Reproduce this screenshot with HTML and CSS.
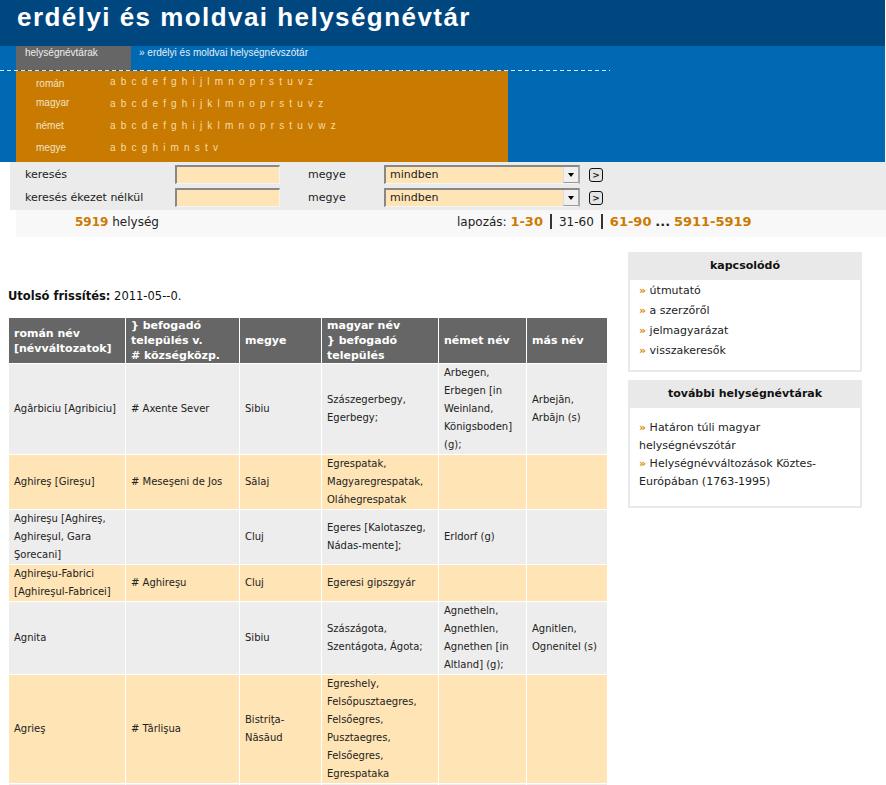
FILE: index.html
```html
<!DOCTYPE html>
<html lang="hu">
<head>
<meta charset="utf-8">
<title>erdélyi és moldvai helységnévtár</title>
<link rel="stylesheet" href="styles.css">
</head>
<body>
<header class="masthead">
  <h1 class="site-title">erdélyi és moldvai helységnévtár</h1>
</header>
<nav class="navbar">
  <div class="tabs">
    <span class="tab">helységnévtárak</span>
    <span class="crumb">» erdélyi és moldvai helységnévszótár</span>
  </div>
  <div class="dash"></div>
  <div class="alpha">
    <div class="alpha-row"><span class="alpha-label lbl-1">román</span><span class="letters">a b c d e f g h i j l m n o p r s t u v z</span></div>
    <div class="alpha-row"><span class="alpha-label lbl-2">magyar</span><span class="letters">a b c d e f g h i j k l m n o p r s t u v z</span></div>
    <div class="alpha-row"><span class="alpha-label">német</span><span class="letters">a b c d e f g h i j k l m n o p r s t u v w z</span></div>
    <div class="alpha-row"><span class="alpha-label">megye</span><span class="letters">a b c g h i m n s t v</span></div>
  </div>
</nav>
<form class="search">
  <div class="search-row">
    <span class="s-label">keresés</span>
    <span class="s-input"></span>
    <span class="s-megye">megye</span>
    <span class="s-select"><span class="s-value">mindben</span><span class="s-arrow"><span class="tri"></span></span></span>
    <span class="s-go">&gt;</span>
  </div>
  <div class="search-row">
    <span class="s-label">keresés ékezet nélkül</span>
    <span class="s-input"></span>
    <span class="s-megye">megye</span>
    <span class="s-select"><span class="s-value">mindben</span><span class="s-arrow"><span class="tri"></span></span></span>
    <span class="s-go">&gt;</span>
  </div>
</form>
<div class="countbar">
  <span class="count"><b class="hl">5919</b> helység</span>
  <span class="pager">lapozás: <b class="hl big">1-30</b><span class="sep"></span>31-60<span class="sep"></span><b class="hl big">61-90</b> <b class="big">...</b> <b class="hl big">5911-5919</b></span>
</div>
<div class="content">
  <main class="main">
    <p class="updated"><b>Utolsó frissítés:</b> 2011-05--0.</p>
    <table class="places">
      <colgroup>
        <col class="c1"><col class="c2"><col class="c3"><col class="c4"><col class="c5"><col class="c6">
      </colgroup>
      <thead>
        <tr>
          <th>román név<br>[névváltozatok]</th>
          <th>} befogadó<br>település v.<br># községközp.</th>
          <th>megye</th>
          <th>magyar név<br>} befogadó<br>település</th>
          <th>német név</th>
          <th>más név</th>
        </tr>
      </thead>
      <tbody>
        <tr class="odd">
          <td>Agârbiciu [Agribiciu]</td>
          <td># Axente Sever</td>
          <td>Sibiu</td>
          <td>Szászegerbegy, Egerbegy;</td>
          <td>Arbegen, Erbegen [in Weinland, Königsboden] (g);</td>
          <td>Arbejān, Arbājn (s)</td>
        </tr>
        <tr class="even">
          <td>Aghireş [Gireşu]</td>
          <td># Meseşeni de Jos</td>
          <td>Sălaj</td>
          <td>Egrespatak, Magyaregrespatak, Oláhegrespatak</td>
          <td></td>
          <td></td>
        </tr>
        <tr class="odd">
          <td>Aghireşu [Aghireş, Aghireşul, Gara Şorecani]</td>
          <td></td>
          <td>Cluj</td>
          <td>Egeres [Kalotaszeg, Nádas-mente];</td>
          <td>Erldorf (g)</td>
          <td></td>
        </tr>
        <tr class="even">
          <td>Aghireşu-Fabrici [Aghireşul-Fabricei]</td>
          <td># Aghireşu</td>
          <td>Cluj</td>
          <td>Egeresi gipszgyár</td>
          <td></td>
          <td></td>
        </tr>
        <tr class="odd">
          <td>Agnita</td>
          <td></td>
          <td>Sibiu</td>
          <td>Szászágota, Szentágota, Ágota;</td>
          <td>Agnetheln, Agnethlen, Agnethen [in Altland] (g);</td>
          <td>Agnitlen, Ognenitel (s)</td>
        </tr>
        <tr class="even">
          <td>Agrieş</td>
          <td># Târlişua</td>
          <td>Bistriţa-Năsăud</td>
          <td>Egreshely, Felsőpusztaegres, Felsőegres, Pusztaegres, Felsőegres, Egrespataka</td>
          <td></td>
          <td></td>
        </tr>
        <tr class="odd">
          <td>&nbsp;</td>
          <td>&nbsp;</td>
          <td>&nbsp;</td>
          <td>&nbsp;</td>
          <td>&nbsp;</td>
          <td>&nbsp;</td>
        </tr>
      </tbody>
    </table>
  </main>
  <aside class="sidebar">
    <section class="box">
      <h2 class="box-head">kapcsolódó</h2>
      <div class="box-body links">
        <div><span class="raquo">»</span> útmutató</div>
        <div><span class="raquo">»</span> a szerzőről</div>
        <div><span class="raquo">»</span> jelmagyarázat</div>
        <div><span class="raquo">»</span> visszakeresők</div>
      </div>
    </section>
    <section class="box">
      <h2 class="box-head">további helységnévtárak</h2>
      <div class="box-body more">
        <span class="raquo">»</span> Határon túli magyar helységnévszótár<br>
        <span class="raquo">»</span> Helységnévváltozások Köztes-Európában (1763-1995)
      </div>
    </section>
  </aside>
</div>
</body>
</html>
```

FILE: styles.css
```css
body {
  margin: 0;
  font-family: "DejaVu Sans", Verdana, sans-serif;
  color: #222;
  background: #fff;
}

.masthead {
  width: 885px;
  height: 46px;
  box-sizing: border-box;
  padding: 2px 0 0 17px;
  background: #00467f;
}

.site-title {
  margin: 0;
  font: bold 26px/30px "Liberation Sans", Arial, sans-serif;
  letter-spacing: 1.45px;
  color: #fff;
}

.navbar {
  width: 885px;
  background: #0069b4;
}

.tabs {
  height: 24px;
  display: flex;
  font: 10px/14px "Liberation Sans", Arial, sans-serif;
}

.tab {
  margin-left: 16px;
  width: 115px;
  box-sizing: border-box;
  padding-left: 9px;
  background: #666;
  color: #eee;
}

.crumb {
  margin-left: 8px;
  color: #e4edf6;
}

.dash {
  width: 610px;
  height: 1px;
  background: repeating-linear-gradient(to right, #dce6f0 0 4px, transparent 4px 7px);
}

.alpha {
  margin-left: 16px;
  width: 492px;
  height: 91px;
  background: #c97a00;
}

.alpha-row {
  height: 22px;
  display: flex;
  align-items: center;
  font: 10px/12px "Liberation Sans", Arial, sans-serif;
  color: #f3e3c6;
}

.alpha-label {
  width: 94px;
  box-sizing: border-box;
  padding-left: 20px;
}

.lbl-1 { padding-top: 4px; }
.lbl-2 { padding-bottom: 3px; }

.letters {
  word-spacing: 2.4px;
  color: #f6dcaa;
}

.search {
  margin: 0 0 0 10px;
  height: 48px;
  box-sizing: border-box;
  padding: 1px 0 1px 15px;
  background: #ebebeb;
  font-size: 11px;
  color: #222;
}

.search-row {
  height: 23px;
  display: flex;
  align-items: center;
}

.s-label { width: 150px; }

.s-input {
  width: 105px;
  height: 19px;
  box-sizing: border-box;
  background: #ffe4b5;
  border-top: 2px solid #888;
  border-left: 2px solid #888;
  border-right: 1px solid #f4f4f4;
  border-bottom: 1px solid #f4f4f4;
}

.s-megye {
  margin-left: 28px;
  width: 76px;
}

.s-select {
  width: 196px;
  height: 19px;
  box-sizing: border-box;
  display: flex;
  background: #ffe4b5;
  border-top: 2px solid #888;
  border-left: 2px solid #888;
  border-right: 2px solid #aaa;
  border-bottom: 1px solid #f4f4f4;
}

.s-value {
  flex: 1;
  padding-left: 4px;
  line-height: 16px;
}

.s-arrow {
  width: 14px;
  display: flex;
  align-items: center;
  justify-content: center;
  background: #f0f0f0;
  border-left: 1px solid #ddd;
  border-bottom: 1px solid #999;
}

.tri {
  width: 0;
  height: 0;
  border-left: 3.5px solid transparent;
  border-right: 3.5px solid transparent;
  border-top: 4px solid #000;
}

.s-go {
  margin-left: 9px;
  width: 14px;
  height: 14px;
  box-sizing: border-box;
  border: 1px solid #111;
  border-radius: 3px;
  background: #e4e4e4;
  font: bold 9px/12px "DejaVu Sans", sans-serif;
  text-align: center;
}

.countbar {
  margin-left: 16px;
  height: 27px;
  box-sizing: border-box;
  padding-top: 3px;
  display: flex;
  background: #f8f8f8;
  font-size: 12px;
  line-height: 18px;
}

.count {
  width: 441px;
  box-sizing: border-box;
  padding-left: 59px;
}

.hl { color: #cc7a00; }

.big { font-size: 13px; }

.sep {
  display: inline-block;
  width: 2px;
  height: 15px;
  margin: 0 7px;
  vertical-align: -3px;
  background: #333;
}

.content {
  display: flex;
  align-items: flex-start;
  padding-top: 15px;
}

.main {
  width: 610px;
  box-sizing: border-box;
  padding: 36px 0 0 8px;
}

.updated {
  margin: 0 0 13px;
  font-size: 11.5px;
  line-height: 16px;
  color: #111;
}

.places {
  width: 600px;
  table-layout: fixed;
  border-collapse: separate;
  border-spacing: 1px;
  font-size: 10px;
  line-height: 18px;
  color: #222;
}

.c1 { width: 116px; }
.c2 { width: 113px; }
.c3 { width: 81px; }
.c4 { width: 116px; }
.c5 { width: 87px; }
.c6 { width: 80px; }

.places th {
  background: #666;
  color: #fff;
  font-size: 11px;
  font-weight: bold;
  line-height: 15px;
  text-align: left;
  vertical-align: middle;
  padding: 0 5px;
}

.places td {
  padding: 0 5px;
  vertical-align: middle;
}

.odd td { background: #ededed; }
.even td { background: #ffe4b5; }

.sidebar {
  width: 234px;
  margin-left: 18px;
}

.box {
  border: 2px solid #e9e9e9;
  border-top: 0;
  background: #fff;
  margin-bottom: 8px;
}

.box-head {
  margin: 0 -2px;
  height: 28px;
  background: #e9e9e9;
  font-size: 11px;
  font-weight: bold;
  line-height: 28px;
  text-align: center;
  color: #111;
}

.box-body {
  font-size: 11px;
  color: #222;
}

.links {
  padding: 1px 9px 9px;
  line-height: 20px;
}

.more {
  padding: 11px 9px 15px;
  line-height: 18px;
}

.raquo {
  color: #d98b00;
  font-weight: bold;
}
```
